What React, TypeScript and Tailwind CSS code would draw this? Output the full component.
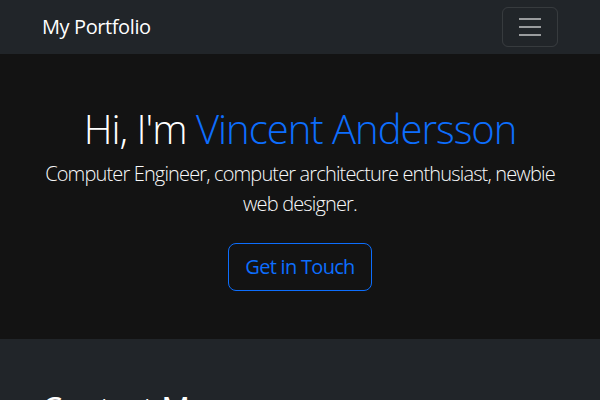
export default function App() {
    return (
        <div className="min-h-[400px] bg-[#212529] font-['Open_Sans',sans-serif] text-white">
            <nav className="h-[54px] bg-[#212529]">
                <div className="mx-auto flex h-full max-w-[540px] items-center justify-between px-3">
                    <a href="#" className="text-[20px] leading-[30px] tracking-[-0.4px] text-white">
                        My Portfolio
                    </a>
                    <button className="flex h-10 w-14 items-center justify-center rounded-md border border-white/10">
                        <svg width="30" height="30" viewBox="0 0 30 30">
                            <path
                                d="M4 7h22M4 15h22M4 23h22"
                                stroke="rgba(255,255,255,0.55)"
                                strokeWidth="2"
                            />
                        </svg>
                    </button>
                </div>
            </nav>

            <header className="bg-[#131313] py-12 text-center">
                <div className="mx-auto max-w-[540px] px-3">
                    <h1 className="mb-[6px] pt-[3px] text-[40px] font-light leading-[48px] tracking-[-1px]">
                        Hi, I'm <span className="text-[#0d6efd]">Vincent Andersson</span>
                    </h1>
                    <p className="mb-6 text-[20px] font-light leading-[30px] tracking-[-0.85px] text-[#f8f9fa]">
                        Computer Engineer, computer architecture enthusiast, newbie web designer.
                    </p>
                    <a
                        href="#contact"
                        className="inline-block rounded-lg border border-[#0d6efd] px-4 py-2 text-[20px] leading-[30px] tracking-[-0.7px] text-[#0d6efd]"
                    >
                        Get in Touch
                    </a>
                </div>
            </header>

            <section id="contact" className="pt-[51px] pb-12">
                <div className="mx-auto max-w-[540px] px-3">
                    <h2 className="text-[32px] leading-[38px] tracking-[-0.5px]">Contact Me</h2>
                </div>
            </section>
        </div>
    );
}
